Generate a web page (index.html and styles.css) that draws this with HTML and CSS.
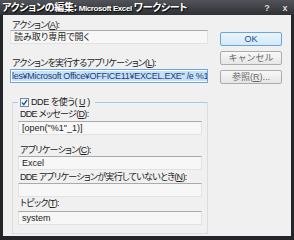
FILE: index.html
```html
<!DOCTYPE html>
<html lang="ja">
<head>
    <meta charset="UTF-8">
    <title>アクションの編集</title>
    <link rel="stylesheet" href="styles.css">
</head>
<body>
    <div class="window">
        <div class="title-bar">
            <span class="title-text">アクションの編集: <span class="title-latin">Microsoft Excel</span> ワークシート</span>
            <span class="title-btn">?</span>
            <span class="title-btn">x</span>
        </div>
        <div class="client">
            <div class="main-row">
                <div class="left-col">
                    <div class="label">アクション(<u>A</u>):</div>
                    <div class="field">読み取り専用で開く</div>
                    <div class="label label-l">アクションを実行するアプリケーション(<u>L</u>):</div>
                    <div class="field field-active"><span class="selected">les¥Microsoft Office¥OFFICE11¥EXCEL.EXE" /e %1</span></div>
                </div>
                <div class="buttons">
                    <button class="btn btn-default">OK</button>
                    <button class="btn">キャンセル</button>
                    <button class="btn">参照(<u>R</u>)...</button>
                </div>
            </div>
            <fieldset class="group">
                <legend class="group-legend">
                    <svg class="check" width="9" height="9" viewBox="0 0 9 9">
                        <rect x="0.5" y="0.5" width="8" height="8" fill="#f4f8fb" stroke="#6f8aa3"/>
                        <path d="M2 4.5 L3.8 6.6 L7 2" fill="none" stroke="#2a53a8" stroke-width="1.4"/>
                    </svg>
                    DDE を使う(<u>U</u>)
                </legend>
                <div class="label label-d">DDE メッセージ(<u>D</u>):</div>
                <div class="field">[open("%1"_1)]</div>
                <div class="label label-c">アプリケーション(<u>C</u>):</div>
                <div class="field">Excel</div>
                <div class="label label-n">DDE アプリケーションが実行していないとき(<u>N</u>):</div>
                <div class="field"></div>
                <div class="label label-t">トピック(<u>T</u>):</div>
                <div class="field">system</div>
            </fieldset>
        </div>
    </div>
</body>
</html>
```

FILE: styles.css
```css
body {
    margin: 0;
    background-color: #232529;
    font-family: "Liberation Sans", "Noto Sans CJK JP", sans-serif;
    font-size: 9px;
    font-feature-settings: "palt";
    color: #222;
}
.window {
    width: 294px;
    height: 240px;
    display: flex;
    flex-direction: column;
}
.title-bar {
    height: 15px;
    display: flex;
    align-items: center;
    padding: 0 3px 0 2px;
    background: linear-gradient(#505358, #2e3034);
    color: #fff;
}
.title-text {
    flex: 1;
    font-family: "Noto Sans CJK JP", sans-serif;
    font-size: 10px;
    font-weight: bold;
    letter-spacing: -0.3px;
    line-height: 13px;
    white-space: nowrap;
    text-shadow: 1px 1px 1px #000;
}
.title-latin {
    font-family: "Liberation Sans", sans-serif;
    font-size: 8px;
    letter-spacing: -0.4px;
}
.title-btn {
    width: 12px;
    margin-left: 6px;
    text-align: center;
    font-family: "Liberation Sans", sans-serif;
    font-size: 9px;
    font-weight: bold;
    color: #d8d8d8;
}
.client {
    flex: 1;
    margin: 0 3px 4px 3px;
    background-color: #f0f0f0;
    padding: 5px 0 0 7px;
}
.main-row {
    display: flex;
    gap: 12px;
}
.left-col {
    width: 198px;
}
.label {
    height: 10px;
    line-height: 10px;
    padding-left: 2px;
    letter-spacing: -0.7px;
    white-space: nowrap;
}
.label-l {
    margin-top: 14px;
    margin-bottom: 1px;
}
.label-d {
    margin-top: 2px;
    margin-bottom: 2px;
}
.label-c {
    margin-top: 10px;
    margin-bottom: 1px;
}
.label-n {
    margin-top: 2px;
    margin-bottom: 1px;
}
.label-t {
    margin-top: 1px;
    margin-bottom: 3px;
}
.field {
    height: 12px;
    line-height: 12px;
    padding: 0 3px;
    background-color: #f7f7f7;
    border: 1px solid #e2e2e2;
    border-top-color: #aaaaaa;
    white-space: nowrap;
    overflow: hidden;
}
.field-active {
    border-color: #6aa6dc;
    background-color: #fff;
    padding: 0 1px;
    letter-spacing: -0.3px;
}
.selected {
    background-color: #c6e0f7;
    color: #1a3d7a;
}
.buttons {
    display: flex;
    flex-direction: column;
    gap: 5px;
    padding-top: 12px;
}
.btn {
    width: 62px;
    height: 14px;
    padding: 0;
    font-family: inherit;
    font-size: 9px;
    line-height: 12px;
    color: #666;
    background: linear-gradient(#f8f8f8, #e6e6e6);
    border: 1px solid #acacac;
    border-radius: 2px;
}
.btn-default {
    color: #1d4b8a;
    background: linear-gradient(#ebf5fc, #d2e8f6);
    border-color: #6aa6dc;
}
.group {
    width: 196px;
    box-sizing: border-box;
    margin: 13px 0 0 2px;
    padding: 0 5px 8px 5px;
    border: 1px solid #dcdcdc;
    border-top: 1px solid #9fcdec;
    min-width: 0;
}
.group-legend {
    padding: 0 5px 0 2px;
    display: flex;
    align-items: center;
    gap: 2px;
    height: 10px;
    line-height: 10px;
    letter-spacing: -0.4px;
}
.group .field {
    width: 176px;
}
```
